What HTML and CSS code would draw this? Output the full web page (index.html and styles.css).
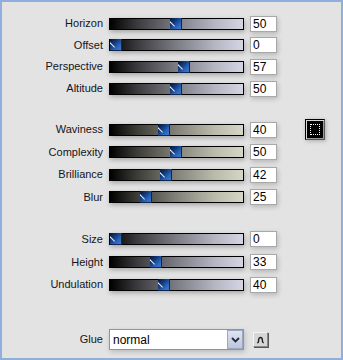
FILE: index.html
```html
<!DOCTYPE html>
<html>
<head>
<meta charset="utf-8">
<link rel="stylesheet" href="styles.css">
</head>
<body>
<div class="frame">
  <div class="group g1">
    <div class="row"><span class="label">Horizon</span><div class="track cool"><span class="thumb" style="left:60px"></span></div><span class="num">50</span></div>
    <div class="row"><span class="label">Offset</span><div class="track cool"><span class="thumb" style="left:0px"></span></div><span class="num">0</span></div>
    <div class="row"><span class="label">Perspective</span><div class="track cool"><span class="thumb" style="left:68.4px"></span></div><span class="num">57</span></div>
    <div class="row"><span class="label">Altitude</span><div class="track cool"><span class="thumb" style="left:60px"></span></div><span class="num">50</span></div>
  </div>
  <div class="group g2">
    <div class="row"><span class="label">Waviness</span><div class="track warm"><span class="thumb" style="left:48px"></span></div><span class="num">40</span><span class="swatch"><span class="marquee"></span></span></div>
    <div class="row"><span class="label">Complexity</span><div class="track warm"><span class="thumb" style="left:60px"></span></div><span class="num">50</span></div>
    <div class="row"><span class="label">Brilliance</span><div class="track warm"><span class="thumb" style="left:50.4px"></span></div><span class="num">42</span></div>
    <div class="row"><span class="label">Blur</span><div class="track warm"><span class="thumb" style="left:30px"></span></div><span class="num">25</span></div>
  </div>
  <div class="group g3">
    <div class="row"><span class="label">Size</span><div class="track cool"><span class="thumb" style="left:0px"></span></div><span class="num">0</span></div>
    <div class="row"><span class="label">Height</span><div class="track cool"><span class="thumb" style="left:39.6px"></span></div><span class="num">33</span></div>
    <div class="row"><span class="label">Undulation</span><div class="track cool"><span class="thumb" style="left:48px"></span></div><span class="num">40</span></div>
  </div>
  <div class="glue-row">
    <span class="label">Glue</span>
    <div class="select"><span class="select-text">normal</span><span class="drop"><svg width="9" height="6" viewBox="0 0 9 6"><path d="M1 1 L4.5 4.5 L8 1" fill="none" stroke="#1e2a44" stroke-width="1.8"/></svg></span></div>
    <span class="sbtn"><svg width="9" height="8" viewBox="0 0 9 8"><path d="M1.2 6.5 Q2.6 7 2.6 4.6 Q2.6 1.5 4.5 1.5 Q6.4 1.5 6.4 4.4 Q6.4 7 7.8 6.5" fill="none" stroke="#222" stroke-width="1.4"/></svg></span>
  </div>
</div>
</body>
</html>
```
FILE: styles.css
```css
html, body {
  margin: 0;
  padding: 0;
  background: #e4e4e4;
}
.frame {
  width: 343px;
  height: 360px;
  box-sizing: border-box;
  border: 2px solid #8fb0dc;
  background: #e3e3e3;
  padding-top: 10.7px;
  font-family: "Liberation Sans", Arial, sans-serif;
  font-size: 11px;
  color: #141420;
}
.group {
  display: flex;
  flex-direction: column;
}
.row {
  display: grid;
  grid-template-columns: 101px 135px 27px auto;
  column-gap: 6px;
  align-items: center;
}
.g1 .row { height: 21.7px; }
.g2 { margin-top: 19.25px; }
.g2 .row { height: 22.5px; }
.g3 { margin-top: 19.35px; }
.g3 .row { height: 22.75px; }
.label {
  text-align: right;
  line-height: 13px;
}
.track {
  position: relative;
  height: 12px;
  box-sizing: border-box;
  border: 1px solid #000;
  box-shadow: 1px 2px 5px rgba(0, 0, 0, 0.28);
}
.cool {
  background: linear-gradient(to right, #000 0%, #3a3a3e 20%, #7c7c84 50%, #b4b4c2 78%, #d4d4e2 100%);
}
.warm {
  background: linear-gradient(to right, #000 0%, #3c3c36 20%, #82827a 50%, #babaaa 78%, #d6d6c6 100%);
}
.thumb {
  position: absolute;
  top: -1px;
  width: 12px;
  height: 12px;
  box-sizing: border-box;
  background: linear-gradient(135deg, #08142c 0%, #143c7c 40%, #2a64bc 70%, #3c7ad4 100%);
  border-right: 1px solid #10264e;
  border-bottom: 1px solid #10264e;
  overflow: hidden;
}
.thumb::after {
  content: "";
  position: absolute;
  left: 0px;
  top: 3px;
  width: 7px;
  height: 1px;
  background: #e8eefc;
  transform: rotate(45deg);
  transform-origin: 0 0;
}
.num {
  height: 16px;
  box-sizing: border-box;
  border: 1px solid #a8a8a8;
  background: #fff;
  font-size: 12px;
  line-height: 14px;
  padding-left: 2px;
  color: #000;
  box-shadow: 1px 2px 5px rgba(0, 0, 0, 0.2);
}
.swatch {
  margin-left: 22px;
  width: 20px;
  height: 21px;
  box-sizing: border-box;
  border: 1px solid #000;
  border-right-color: #555;
  border-bottom-color: #555;
  box-shadow: inset 1px 1px 0 #d8d8d8, inset -1px -1px 0 #9a9a9a, 1px 1px 4px rgba(0,0,0,0.25);
  background: #000;
  padding: 4px;
  display: flex;
}
.marquee {
  flex: 1;
  border: 1px dotted #fff;
}
.glue-row {
  margin-top: 32.6px;
  height: 22px;
  display: grid;
  grid-template-columns: 101px 135px 15px;
  column-gap: 6px;
  align-items: center;
}
.glue-row .sbtn { margin-left: 3px; }
.select {
  height: 21px;
  box-sizing: border-box;
  border: 1px solid #8896aa;
  background: #fff;
  display: flex;
  align-items: center;
  box-shadow: 1px 2px 5px rgba(0, 0, 0, 0.18);
}
.select-text {
  flex: 1;
  font-size: 12px;
  padding-left: 3px;
  color: #000;
}
.drop {
  width: 16px;
  height: 19px;
  box-sizing: border-box;
  border: 1px solid #9aa8c4;
  background: linear-gradient(#dfe4f0, #bcc6dc);
  display: flex;
  align-items: center;
  justify-content: center;
}
.sbtn {
  width: 15px;
  height: 15px;
  box-sizing: border-box;
  border: 1px solid #888;
  border-top-color: #f4f4f4;
  border-left-color: #f4f4f4;
  box-shadow: 1px 1px 0 #555;
  background: #d6d6d6;
  display: flex;
  align-items: center;
  justify-content: center;
}
```
